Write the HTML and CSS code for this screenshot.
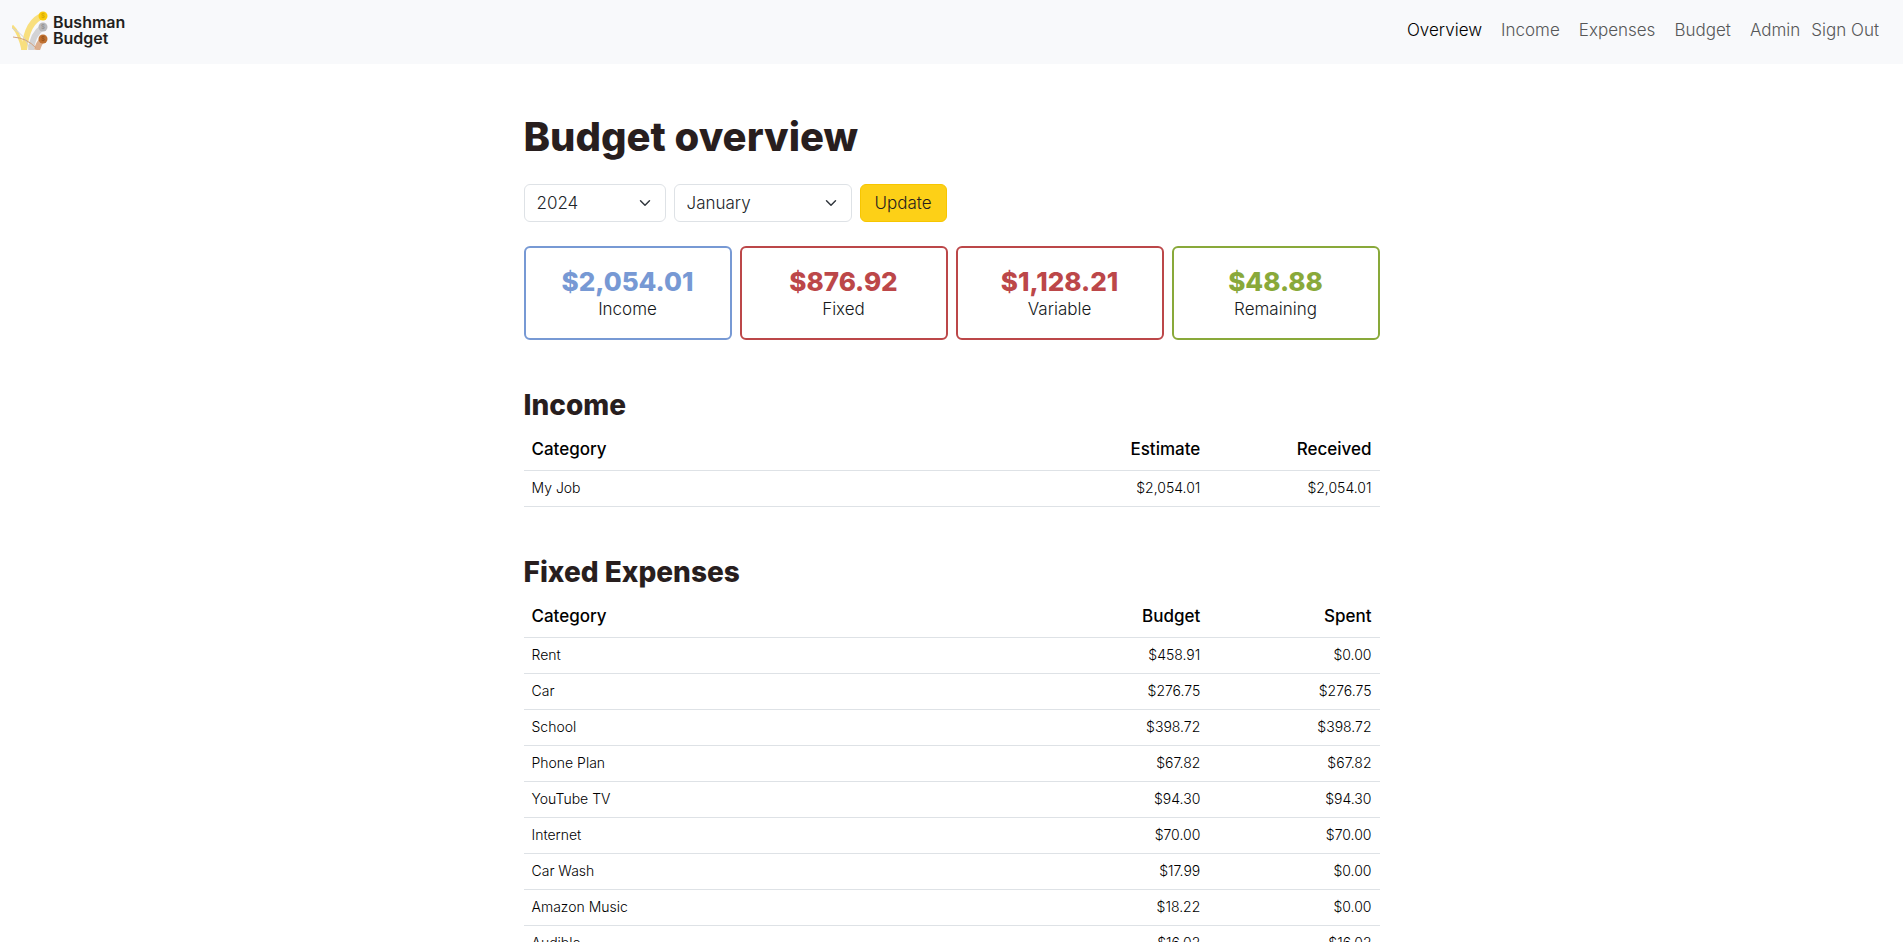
FILE: index.html
```html
<!doctype html>
<html lang="en">
<head>
  <meta charset="UTF-8">
  <meta name="viewport" content="width=device-width, initial-scale=1.0">
  <title>Bushman Budget - Overview</title>
  <link rel="stylesheet" href="styles.css">
</head>
<body>
  <nav class="navbar">
    <a class="brand" href="#">
      <svg class="brand-mark" viewBox="0 0 36 40" aria-hidden="true">
        <g fill="none">
          <path d="M12 40 C14 22 20 9 31 6" stroke="#f8df7e" stroke-width="6"/>
          <path d="M0 16 Q7 22 11 40" stroke="#f8df7e" stroke-width="3"/>
          <path d="M19 40 C20 29 25 21 31 17" stroke="#d3d3d5" stroke-width="6"/>
          <path d="M0 18 Q14 25 18 40" stroke="#d3d3d5" stroke-width="1"/>
          <path d="M25 40 C26 35 28 32 31 29" stroke="#dcae8d" stroke-width="6"/>
          <path d="M1 27 Q15 28 24 38" stroke="#d3a27e" stroke-width="1"/>
        </g>
        <circle cx="31" cy="6" r="4.5" fill="#f9cb0d"/>
        <circle cx="31" cy="17" r="4.5" fill="#b9b9bb"/>
        <circle cx="31" cy="29" r="4.5" fill="#bf7030"/>
        <g class="coin-sign">
          <text x="31" y="8" fill="#d5a900">$</text>
          <text x="31" y="19" fill="#909090">$</text>
          <text x="31" y="31" fill="#975018">$</text>
        </g>
      </svg>
      <span class="brand-name">
        <span>Bushman</span>
        <span>Budget</span>
      </span>
    </a>
    <div class="nav-links">
      <a class="nav-link active" href="#">Overview</a>
      <a class="nav-link" href="#">Income</a>
      <a class="nav-link" href="#">Expenses</a>
      <a class="nav-link" href="#">Budget</a>
      <a class="nav-link" href="#">Admin</a>
      <button class="sign-out" type="button">Sign Out</button>
    </div>
  </nav>

  <main class="container">
    <h1>Budget overview</h1>

    <form class="filters">
      <select class="form-select year" aria-label="Year">
        <option>2024</option>
      </select>
      <select class="form-select month" aria-label="Month">
        <option>January</option>
      </select>
      <button class="btn-update" type="button">Update</button>
    </form>

    <div class="cards">
      <div class="card income">
        <div class="amount">$2,054.01</div>
        <div>Income</div>
      </div>
      <div class="card expense">
        <div class="amount">$876.92</div>
        <div>Fixed</div>
      </div>
      <div class="card expense">
        <div class="amount">$1,128.21</div>
        <div>Variable</div>
      </div>
      <div class="card remaining">
        <div class="amount">$48.88</div>
        <div>Remaining</div>
      </div>
    </div>

    <h2>Income</h2>
    <table class="table">
      <thead>
        <tr><th>Category</th><th>Estimate</th><th>Received</th></tr>
      </thead>
      <tbody>
        <tr><td>My Job</td><td>$2,054.01</td><td>$2,054.01</td></tr>
      </tbody>
    </table>

    <h2>Fixed Expenses</h2>
    <table class="table">
      <thead>
        <tr><th>Category</th><th>Budget</th><th>Spent</th></tr>
      </thead>
      <tbody>
        <tr><td>Rent</td><td>$458.91</td><td>$0.00</td></tr>
        <tr><td>Car</td><td>$276.75</td><td>$276.75</td></tr>
        <tr><td>School</td><td>$398.72</td><td>$398.72</td></tr>
        <tr><td>Phone Plan</td><td>$67.82</td><td>$67.82</td></tr>
        <tr><td>YouTube TV</td><td>$94.30</td><td>$94.30</td></tr>
        <tr><td>Internet</td><td>$70.00</td><td>$70.00</td></tr>
        <tr><td>Car Wash</td><td>$17.99</td><td>$0.00</td></tr>
        <tr><td>Amazon Music</td><td>$18.22</td><td>$0.00</td></tr>
        <tr><td>Audible</td><td>$16.02</td><td>$16.02</td></tr>
      </tbody>
    </table>
  </main>
</body>
</html>
```
FILE: styles.css
```css
* {
    box-sizing: border-box;
}
body {
    margin: 0;
    background: #fff;
    color: #16191c;
    font-family: Inter, "Liberation Sans", sans-serif;
    font-size: 17px;
    font-weight: 300;
    line-height: 24px;
}
button, select {
    font: inherit;
}

/* navbar */
.navbar {
    display: flex;
    align-items: center;
    justify-content: space-between;
    height: 64px;
    padding: 0 24px 4px 12px;
    background: #f8f9fb;
}
.brand {
    display: flex;
    align-items: center;
    gap: 5px;
    color: #231f20;
    text-decoration: none;
}
.brand-mark {
    width: 36px;
    height: 40px;
}
.brand-name {
    display: flex;
    flex-direction: column;
    font-size: 16px;
    font-weight: 600;
    line-height: 16px;
}
.coin-sign {
    font-size: 6px;
    font-weight: 600;
    text-anchor: middle;
}
.nav-links {
    display: flex;
    align-items: center;
    gap: 3px;
}
.nav-link {
    padding: 8px;
    color: #565758;
    text-decoration: none;
}
.nav-link.active {
    color: #000;
}
.sign-out {
    padding: 0;
    border: 0;
    background: none;
    color: #565758;
    cursor: pointer;
}

/* content */
.container {
    max-width: 856px;
    margin: 0 auto;
    padding-top: 48px;
}
h1, h2 {
    margin: 0;
    color: #281e1e;
    font-weight: 800;
}
h1 {
    font-size: 40px;
    line-height: 50px;
    margin-bottom: 22px;
}
h2 {
    font-size: 28px;
    line-height: 34px;
    margin: 48px 0 7px;
}
.filters {
    display: flex;
    gap: 8px;
    margin-bottom: 24px;
}
.form-select {
    height: 38px;
    padding: 0 36px 0 12px;
    border: 1px solid #dee2e6;
    border-radius: 6px;
    appearance: none;
    color: #212529;
    background: #fff url("data:image/svg+xml,%3csvg xmlns='http://www.w3.org/2000/svg' viewBox='0 0 16 16'%3e%3cpath fill='none' stroke='%23343a40' stroke-linecap='round' stroke-linejoin='round' stroke-width='2' d='m2 5 6 6 6-6'/%3e%3c/svg%3e") no-repeat right 14px center / 12px;
}
.year {
    width: 142px;
}
.month {
    width: 178px;
}
.btn-update {
    height: 38px;
    padding: 0 14px;
    border: 1px solid #f7c600;
    border-radius: 6px;
    background: #fdd017;
    color: #281e1e;
    cursor: pointer;
}
.cards {
    display: grid;
    grid-template-columns: repeat(4, 1fr);
    gap: 8px;
}
.card {
    padding: 18px 16px 17px;
    border: 2px solid;
    border-radius: 6px;
    text-align: center;
}
.card.income {
    border-color: #7799d4;
}
.card.expense {
    border-color: #bc4749;
}
.card.remaining {
    border-color: #89a93a;
}
.amount {
    font-size: 26px;
    font-weight: 800;
    line-height: 31px;
}
.income .amount {
    color: #7799d4;
}
.expense .amount {
    color: #bc4749;
}
.remaining .amount {
    color: #89a93a;
}

/* tables */
.table {
    width: 100%;
    table-layout: fixed;
    border-collapse: separate;
    border-spacing: 0;
    color: #000;
}
.table th, .table td {
    border-bottom: 1px solid #dee2e6;
    text-align: right;
    width: 20%;
}
.table th {
    padding: 8px;
    font-weight: 500;
    line-height: 25px;
}
.table td {
    padding: 6px 8px 8px;
    font-size: 14px;
    line-height: 21px;
}
.table th:first-child, .table td:first-child {
    width: 60%;
    text-align: left;
}
```
